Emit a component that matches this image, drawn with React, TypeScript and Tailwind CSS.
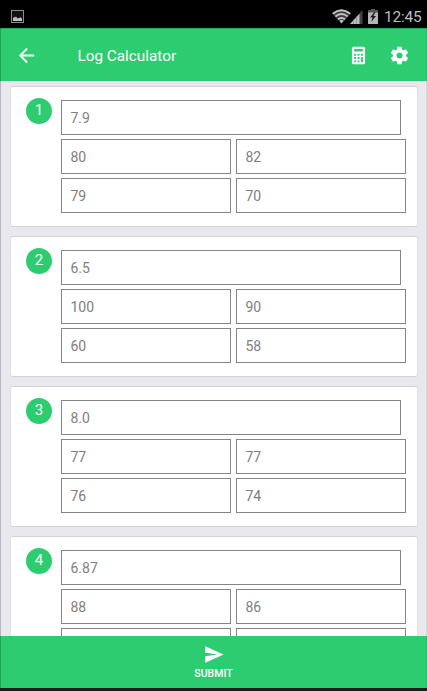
type Entry = { ph: string; readings: string[] };

const entries: Entry[] = [
  { ph: "7.9", readings: ["80", "82", "79", "70"] },
  { ph: "6.5", readings: ["100", "90", "60", "58"] },
  { ph: "8.0", readings: ["77", "77", "76", "74"] },
  { ph: "6.87", readings: ["88", "86", "", ""] },
];

function StatusBar() {
  return (
    <div className="flex h-7 shrink-0 items-center bg-black pl-[11px] pr-[5px] pt-[5px]">
      <svg width="13" height="13" viewBox="0 0 13 13">
        <rect x="0.5" y="0.5" width="12" height="12" fill="#111" stroke="#8c8c8c" />
        <path d="M2 11V8l1-1 1 .5L5 6.5l1.5 2L8 8l1.5-.8L11 8.500V11z" fill="#bdbdbd" />
      </svg>
      <div className="ml-auto flex items-center">
        <svg width="19" height="15" viewBox="0 0 18 14" fill="none">
          <path d="M0 4Q9-3.500 18 4L9 14z" fill="#3d3d3d" />
          <path d="M.8 4.300Q9-2.200 17.200 4.300M3.200 7Q9 2.400 14.800 7M5.600 9.700Q9 7.200 12.400 9.700" stroke="#c4c4c4" strokeWidth="1.800" />
          <path d="M7 11q2-1.300 4 0l-2 2.500z" fill="#c4c4c4" />
        </svg>
        <svg className="-ml-px" width="13" height="15" viewBox="0 0 13 15">
          <path d="M0 15L12.500 1v14z" fill="#444" />
          <path d="M0 15L9.500 4.800V15z" fill="#bdbdbd" />
          <path d="M3.500 10v5M6.500 7v8" stroke="#777" strokeWidth=".5" />
        </svg>
        <svg className="ml-[5px]" width="10" height="15" viewBox="0 0 10 15">
          <path d="M3 0h4v1h3v3H0V1h3z" fill="#555" />
          <path d="M0 3.500h10V15H0z" fill="#b5b5b5" />
          <path d="M6.500 3L2 8.500h2.500L3.300 13 8 7H5.500L7.500 3z" fill="#1c1c1c" />
        </svg>
        <span className="ml-[6px] w-[38px] whitespace-nowrap text-[15.400px] leading-4 tracking-[-0.2px] text-[#bebebe]">12:45</span>
      </div>
    </div>
  );
}

function Header() {
  return (
    <header className="flex h-[53px] shrink-0 items-center border-t border-[#25a95b] bg-[#2ecc71] pl-[14.500px] pr-[17px] text-white">
      <svg width="23" height="23" viewBox="0 0 24 24" fill="currentColor">
        <path d="M20 11H7.830l5.590-5.590L12 4l-8 8 8 8 1.410-1.410L7.830 13H20z" />
      </svg>
      <h1 className="ml-[40px] mt-px text-[15.300px] font-normal leading-5">Log Calculator</h1>
      <svg className="ml-auto" width="21" height="21" viewBox="0 0 24 24">
        <rect x="4.500" y="2" width="15" height="20" rx="1.800" fill="white" />
        <path d="M7 4.500h10v3H7zM7 10h2.200v2.200H7zM10.900 10h2.200v2.200h-2.200zM14.800 10H17v2.200h-2.200zM7 13.800h2.200V16H7zM10.900 13.800h2.200V16h-2.200zM7 17.600h2.200v2.200H7zM10.900 17.600h2.200v2.200h-2.200zM14.800 13.800H17v6h-2.200z" fill="#2ecc71" />
      </svg>
      <svg className="ml-5" width="21" height="21" viewBox="0 0 24 24" fill="currentColor">
        <path d="M19.430 12.980c.04-.32.07-.64.07-.98s-.03-.66-.07-.98l2.110-1.650c.19-.15.24-.42.12-.64l-2-3.460c-.12-.22-.39-.3-.61-.22l-2.490 1c-.52-.4-1.080-.73-1.690-.98l-.38-2.650C14.460 2.180 14.250 2 14 2h-4c-.25 0-.46.18-.49.42l-.38 2.650c-.61.25-1.170.59-1.690.98l-2.490-1c-.23-.09-.49 0-.61.22l-2 3.460c-.13.22-.07.49.12.64l2.110 1.650c-.04.32-.07.65-.07.98s.03.66.07.98l-2.110 1.650c-.19.15-.24.42-.12.64l2 3.460c.12.22.39.3.61.22l2.490-1c.52.4 1.080.73 1.690.98l.38 2.650c.03.24.24.42.49.42h4c.25 0 .46-.18.49-.42l.38-2.650c.61-.25 1.170-.59 1.690-.98l2.490 1c.23.09.49 0 .61-.22l2-3.460c.12-.22.07-.49-.12-.64l-2.110-1.650zM12 15.500c-1.930 0-3.500-1.570-3.500-3.500s1.570-3.500 3.500-3.500 3.500 1.570 3.500 3.500-1.570 3.500-3.500 3.500z" />
      </svg>
    </header>
  );
}

function Field({ value, wide = false }: { value: string; wide?: boolean }) {
  return (
    <div className={`flex h-[35px] items-center border border-[#858585] pl-[8.500px] text-[14px] leading-5 text-[#808080] ${wide ? "w-[340px]" : "w-[170px]"}`}>
      {value}
    </div>
  );
}

function EntryCard({ entry, number }: { entry: Entry; number: number }) {
  return (
    <section className="flex h-[141px] shrink-0 rounded-[3px] border border-x-[#e0e0e4] border-y-[#d3d3d6] bg-white pl-[15px] pt-[11px]">
      <div className="flex size-[26px] shrink-0 justify-center rounded-full bg-[#2ecc71] pt-[2px] text-[15px] leading-5 text-white">
        {number}
      </div>
      <div className="ml-[9px] mt-[2px] flex flex-col gap-1">
        <Field value={entry.ph} wide />
        <div className="grid grid-cols-[170px_170px] gap-x-[5px] gap-y-1">
          {entry.readings.map((reading, i) => (
            <Field key={i} value={reading} />
          ))}
        </div>
      </div>
    </section>
  );
}

export default function App() {
  return (
    <div className="relative flex h-[691px] w-[427px] flex-col overflow-hidden bg-[#e9e8ee] font-[Roboto,sans-serif]">
      <StatusBar />
      <Header />
      <main className="flex min-h-0 flex-1 flex-col gap-[9px] overflow-hidden pl-[10px] pr-[9px] pt-[5px]">
        {entries.map((entry, i) => (
          <EntryCard key={i} entry={entry} number={i + 1} />
        ))}
      </main>
      <footer className="flex h-[52px] shrink-0 flex-col items-center bg-[#2ecc71] pt-[8px] text-white">
        <svg width="22" height="21" viewBox="0 0 24 24" fill="currentColor">
          <path d="M2.010 21.500L23 12 2.010 2.500 2 10l14 2-14 2z" />
        </svg>
        <span className="mt-[3px] text-[10.500px] font-medium leading-3">SUBMIT</span>
      </footer>
      <div className="h-[3px] shrink-0 bg-[#1b1b20]" />
      <div className="pointer-events-none absolute bottom-[3px] left-0 right-0 top-7 border-l border-r border-l-black/20 border-r-black/8" />
    </div>
  );
}
